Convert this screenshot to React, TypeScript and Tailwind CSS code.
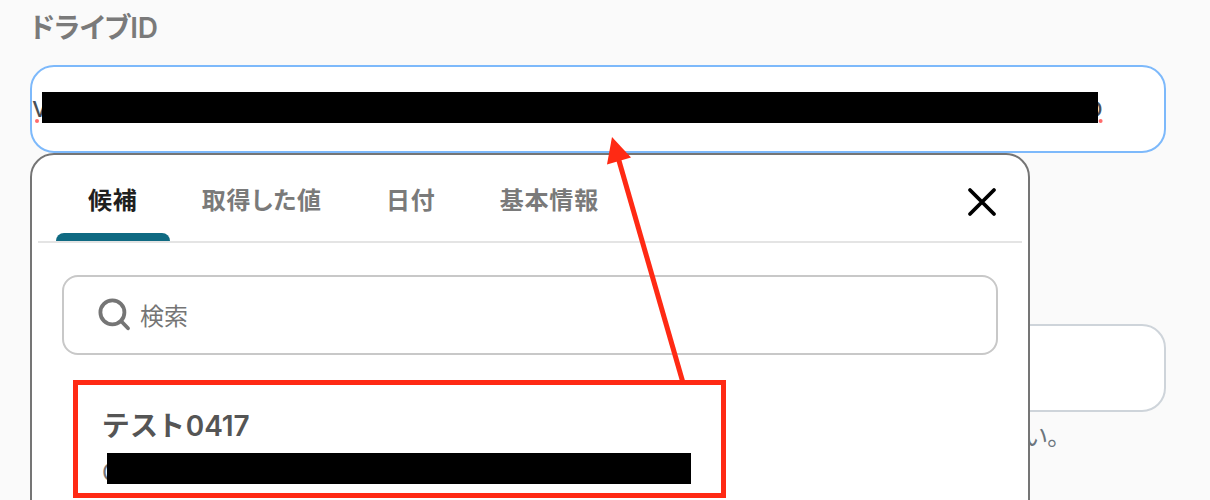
import React, { useState } from 'react';

const TABS = ['候補', '取得した値', '日付', '基本情報'];

const Redacted: React.FC<{ className: string }> = ({ className }) => (
  <span className={`relative h-[31px] shrink-0 bg-black ${className}`} />
);

const SearchIcon: React.FC = () => (
  <svg width="34" height="34" viewBox="0 0 34 34" fill="none" stroke="#757575" strokeWidth="3.8" strokeLinecap="round">
    <circle cx="15.4" cy="14.4" r="12" />
    <path d="M24 23l7 7.3" />
  </svg>
);

const SuggestPanel: React.FC = () => {
  const [active, setActive] = useState(0);

  return (
    <div className="absolute left-[30px] top-[153px] flex h-[420px] w-[1000px] flex-col rounded-3xl border-2 border-[#757575] bg-white">
      <div className="mx-1.5 flex h-[88px] items-stretch border-b-2 border-[#e4e4e4] pl-[18px] pr-[25px]">
        {TABS.map((tab, i) => (
          <button
            key={tab}
            onClick={() => setActive(i)}
            className={`relative flex items-center px-8 pt-[6px] text-2xl font-bold tracking-[0.035em] ${
              i === active ? 'text-[#1f1f1f]' : 'text-[#7a7a7a]'
            }`}
          >
            {tab}
            {i === active && <span className="absolute inset-x-0 bottom-0 h-2 rounded-t-lg bg-[#0f6a82]" />}
          </button>
        ))}
        <button className="ml-auto pt-2" aria-label="close">
          <svg width="30" height="30" viewBox="0 0 30 30" stroke="#000" strokeWidth="3.8" strokeLinecap="round">
            <path d="M3 3l24 24M27 3L3 27" />
          </svg>
        </button>
      </div>

      {/* search */}
      <div className="mx-[30px] mt-8 flex h-20 shrink-0 items-center gap-[9px] rounded-2xl border-2 border-[#c8c8c8] pl-[33px]">
        <SearchIcon />
        <span className="pt-[3px] text-2xl text-[#757575]">検索</span>
      </div>

      {/* highlighted candidate */}
      <div className="ml-[41px] mt-[25px] flex h-[118px] w-[653px] shrink-0 flex-col border-[5px] border-[#ff2a14] pl-[25px] pt-[21px]">
        <p className="text-[28px] font-semibold leading-10 text-[#555]">
          <span className="tracking-[0.085em]">テスト</span>
          <span className="tracking-[-0.005em]">0417</span>
        </p>
        <div className="mt-[7px] flex h-[31px]">
          <span className="-ml-px w-[5px] pt-[6px] text-2xl leading-7 text-[#757575]">C</span>
          <Redacted className="w-[584px]" />
        </div>
      </div>
    </div>
  );
};

const App: React.FC = () => {
  return (
    <div className="relative h-[500px] w-[1210px] overflow-hidden bg-[#fafafa] pl-[30px] pr-11 font-[Inter,'Noto_Sans_CJK_JP',sans-serif] [font-feature-settings:'palt']">
      <label className="flex h-[65px] items-start pt-2 text-[28px] font-semibold leading-10 tracking-[-0.008em] text-[#7a7a7a]">ドライブID</label>

      <div className="flex h-[88px] items-start rounded-3xl border-2 border-[#7db9fb] bg-white pt-[25px] text-[28px] leading-[31px] text-[#495057]">
        <span className="w-2.5">v</span>
        <Redacted className="w-[1056px]" />
        <span className="-ml-3">o</span>
      </div>

      <div className="mt-[171px] h-[88px] rounded-3xl border-2 border-[#ced4da] bg-white" />
      <p className="pr-[107px] pt-[7px] text-right text-2xl leading-9 text-[#6c757d]">ドライブIDを選択してください。</p>

      <SuggestPanel />

      {/* spelling marks and arrow */}
      <svg className="pointer-events-none absolute left-0 top-0" width="1210" height="500" viewBox="0 0 1210 500">
        <circle cx="37" cy="121" r="2" fill="#ff6b6b" />
        <circle cx="1100.6" cy="121" r="2" fill="#ff6b6b" />
        <path d="M618.5 159L682.5 381" stroke="#ff2a14" strokeWidth="5" />
        <path d="M612 137L631 157.5L607 164.5Z" fill="#ff2a14" />
      </svg>
    </div>
  );
};

export default App;
